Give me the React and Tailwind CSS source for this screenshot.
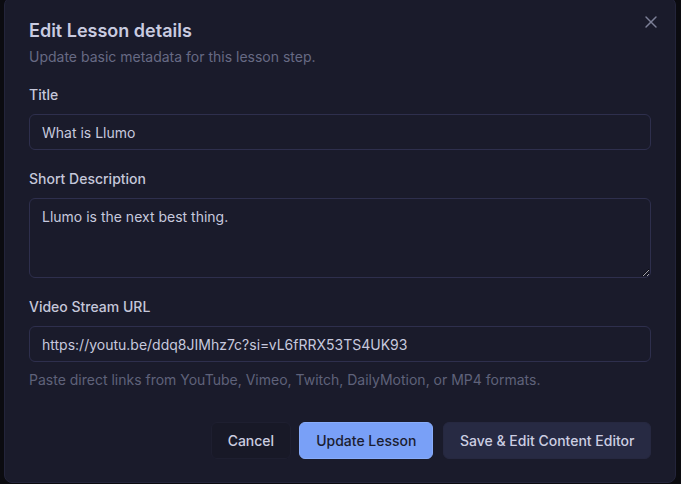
import { X } from 'lucide-react';

function Field({ label, children }) {
  return (
    <div className="flex flex-col">
      <label className="text-sm font-medium leading-5 text-[#c5c7da]">{label}</label>
      <div className="mt-[9px]">{children}</div>
    </div>
  );
}

export default function App() {
  return (
    <div className="w-[681px] h-[484px] overflow-hidden bg-[#0b0b10] font-['Inter',sans-serif]">
      <div className="relative ml-[4px] -mt-[3px] w-[672px] h-[486px] rounded-lg border border-[#23243a] bg-[#1a1b2b] px-6 pt-[19px]">
        <button className="absolute right-[14px] top-[14px] text-[#7d8098]">
          <X size={20} strokeWidth={1.7} />
        </button>

        {/* Header */}
        <h2 className="text-lg font-semibold leading-7 text-[#c9cbe0]">Edit Lesson details</h2>
        <p className="mt-[2px] text-sm leading-5 text-[#676a84]">
          Update basic metadata for this lesson step.
        </p>

        {/* Form */}
        <div className="mt-[18px] flex flex-col gap-[19px]">
          <Field label="Title">
            <input
              defaultValue="What is Llumo"
              className="block h-9 w-full rounded-md border border-[#2e2f4d] bg-[#1a1b2b] px-3 text-sm text-[#c7c9de] outline-none"
            />
          </Field>
          <Field label="Short Description">
            <textarea
              defaultValue="Llumo is the next best thing."
              className="block h-20 w-full rounded-md border border-[#2e2f4d] bg-[#1a1b2b] px-3 py-2 text-sm leading-5 text-[#c7c9de] outline-none"
            />
          </Field>
          <div>
            <Field label="Video Stream URL">
              <input
                defaultValue="https://youtu.be/ddq8JIMhz7c?si=vL6fRRX53TS4UK93"
                className="block h-9 w-full rounded-md border border-[#2e2f4d] bg-[#1a1b2b] px-3 text-sm text-[#c7c9de] outline-none"
              />
            </Field>
            <p className="mt-2 text-sm leading-5 text-[#5f627a]">
              Paste direct links from YouTube, Vimeo, Twitch, DailyMotion, or MP4 formats.
            </p>
          </div>
        </div>

        {/* Actions */}
        <div className="mt-8 flex justify-end gap-2">
          <button className="h-[37px] rounded-md border border-[#1e1f30] bg-[#181927] px-4 text-sm font-medium text-[#cbcde0]">
            Cancel
          </button>
          <button className="h-[37px] rounded-md border border-[#88acfa] bg-[#79a0f7] px-4 text-sm font-medium text-[#1b1d30]">
            Update Lesson
          </button>
          <button className="ml-[2px] h-[37px] rounded-md border border-[#262840] bg-[#272a43] px-[15.5px] text-sm font-medium text-[#ccceE2]">
            Save &amp; Edit Content Editor
          </button>
        </div>
      </div>
    </div>
  );
}
